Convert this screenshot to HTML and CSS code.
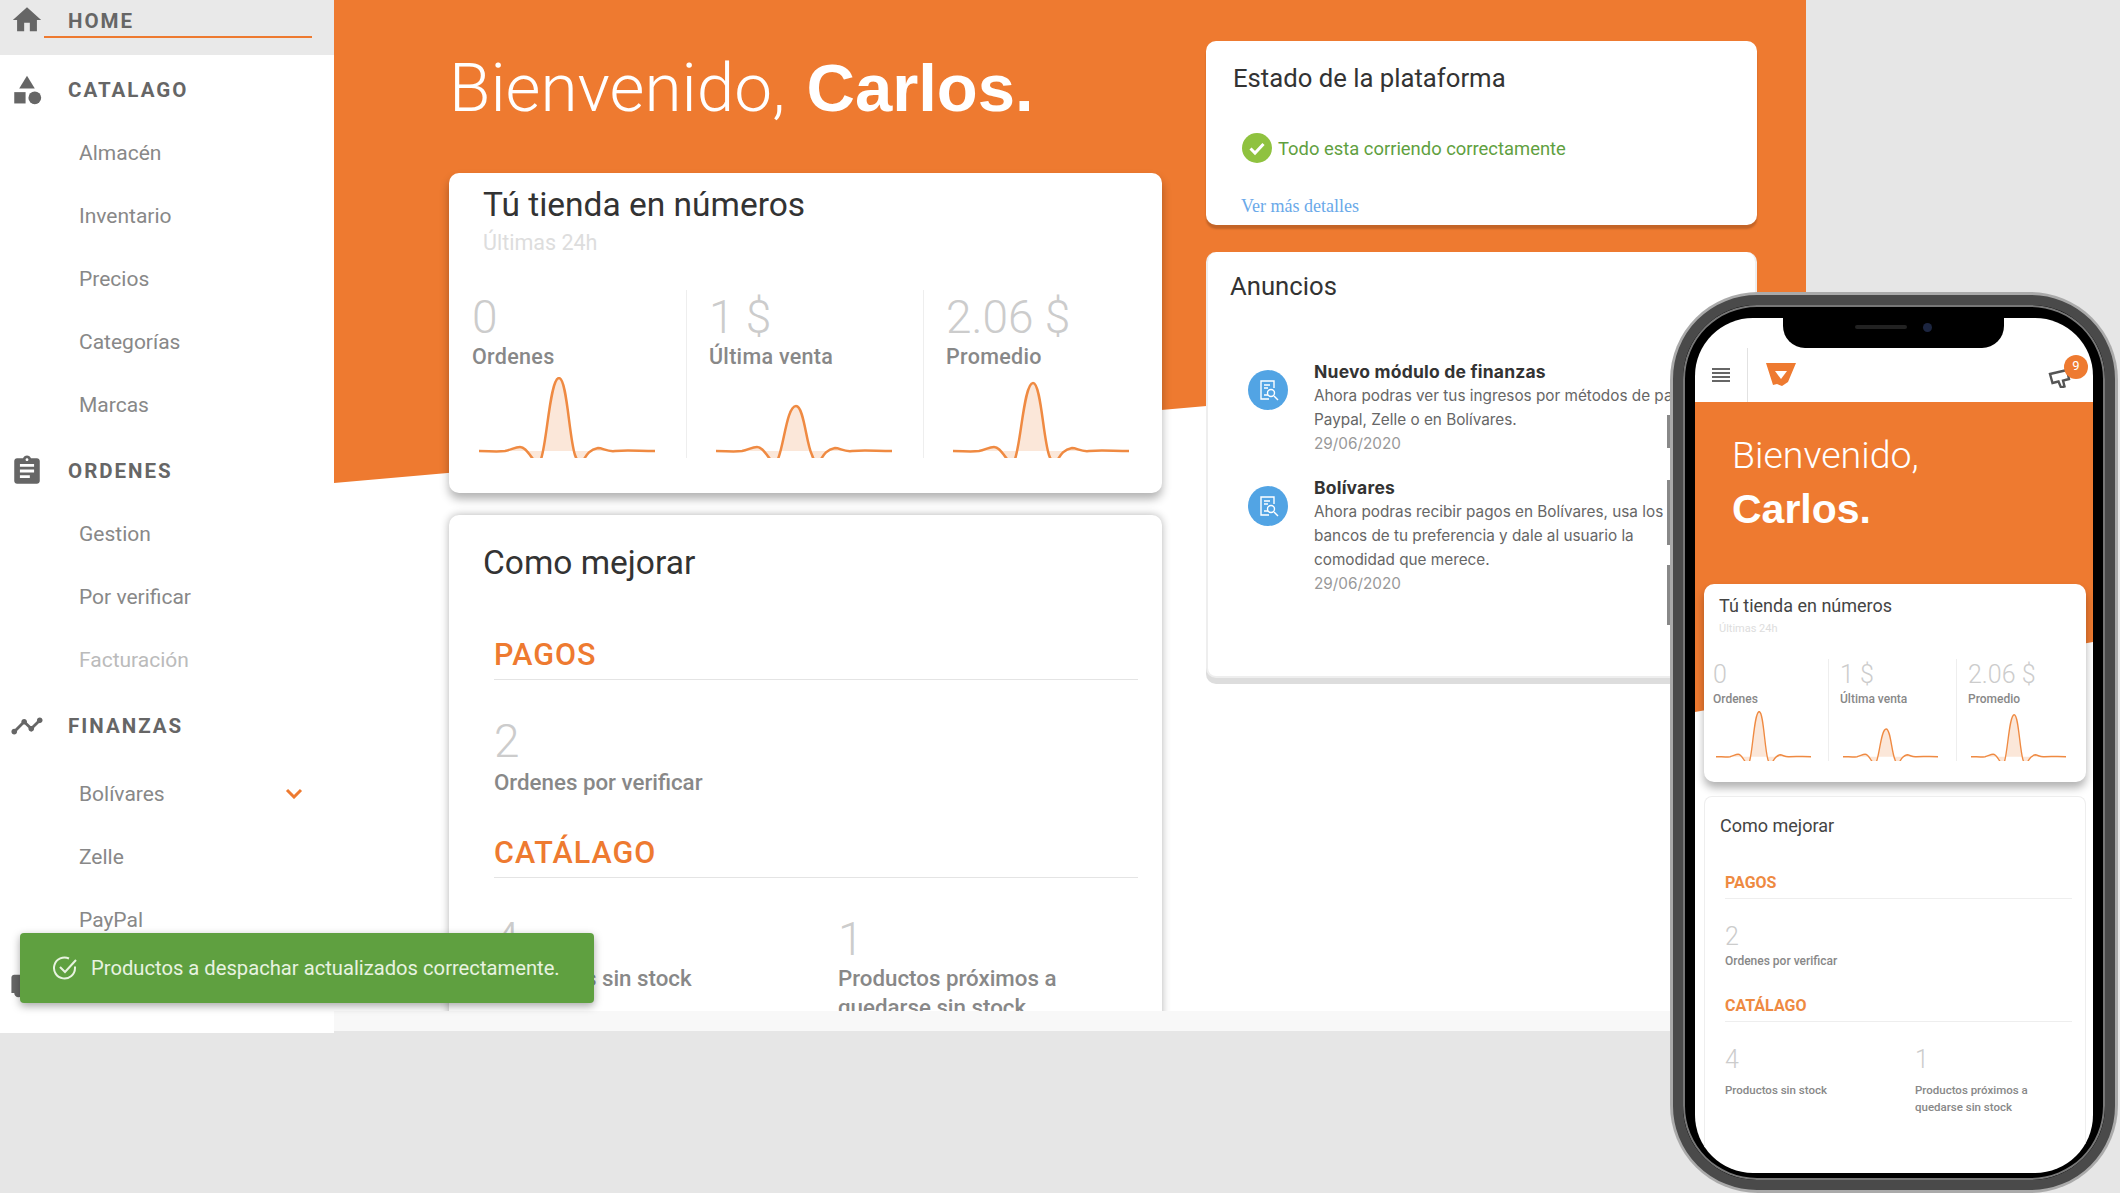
FILE: index.html
```html
<!DOCTYPE html>
<html lang="es">

<head>
  <meta charset="UTF-8">
  <title>Bienvenido, Carlos.</title>
  <link rel="stylesheet" href="styles.css">
</head>

<body>
  <div class="app">
    <!-- Left menu -->
    <nav class="sidebar">
      <div class="nav-home">
        <svg class="nav-icon" viewBox="0 0 24 24"><path d="M10 20v-6h4v6h5v-8h3L12 3 2 12h3v8z"/></svg>
        <span class="nav-home-label">HOME</span>
      </div>

      <div class="nav-group">
        <svg class="nav-icon" viewBox="0 0 24 24"><path d="M12 2l-5.5 9h11z"/><circle cx="17.5" cy="17.5" r="4.5"/><path d="M3 13.5h8v8H3z"/></svg>
        <span>CATALAGO</span>
      </div>
      <a class="nav-sub">Almacén</a>
      <a class="nav-sub">Inventario</a>
      <a class="nav-sub">Precios</a>
      <a class="nav-sub">Categorías</a>
      <a class="nav-sub">Marcas</a>

      <div class="nav-group">
        <svg class="nav-icon" viewBox="0 0 24 24"><path d="M19 3h-4.18C14.4 1.84 13.3 1 12 1c-1.3 0-2.4.84-2.82 2H5c-1.1 0-2 .9-2 2v14c0 1.1.9 2 2 2h14c1.1 0 2-.9 2-2V5c0-1.1-.9-2-2-2zm-7 0c.55 0 1 .45 1 1s-.45 1-1 1-1-.45-1-1 .45-1 1-1zm2 14H7v-2h7v2zm3-4H7v-2h10v2zm0-4H7V7h10v2z"/></svg>
        <span>ORDENES</span>
      </div>
      <a class="nav-sub">Gestion</a>
      <a class="nav-sub">Por verificar</a>
      <a class="nav-sub nav-sub-off">Facturación</a>

      <div class="nav-group nav-group-fin">
        <svg class="nav-icon" viewBox="0 0 24 24"><path d="M23 8c0 1.1-.9 2-2 2-.18 0-.35-.02-.51-.07l-3.56 3.55c.05.16.07.34.07.52 0 1.1-.9 2-2 2s-2-.9-2-2c0-.18.02-.36.07-.52l-2.55-2.55c-.16.05-.34.07-.52.07s-.36-.02-.52-.07l-4.55 4.56c.05.16.07.33.07.51 0 1.1-.9 2-2 2s-2-.9-2-2 .9-2 2-2c.18 0 .35.02.51.07l4.56-4.55C8.02 9.36 8 9.18 8 9c0-1.1.9-2 2-2s2 .9 2 2c0 .18-.02.36-.07.52l2.55 2.55c.16-.05.34-.07.52-.07s.36.02.52.07l3.55-3.56C19.02 8.35 19 8.18 19 8c0-1.1.9-2 2-2s2 .9 2 2z"/></svg>
        <span>FINANZAS</span>
      </div>
      <a class="nav-sub">Bolívares
        <svg class="nav-chevron" viewBox="0 0 18 11"><path d="M2 2l7 7 7-7"/></svg>
      </a>
      <a class="nav-sub">Zelle</a>
      <a class="nav-sub">PayPal</a>

      <div class="nav-group">
        <svg class="nav-icon" viewBox="0 0 24 24"><path d="M20 8h-3V4H3c-1.1 0-2 .9-2 2v11h2c0 1.66 1.34 3 3 3s3-1.34 3-3h6c0 1.66 1.34 3 3 3s3-1.34 3-3h2v-5l-3-4z"/></svg>
      </div>
    </nav>

    <!-- Desktop dashboard -->
    <main class="main">
      <div class="view">
        <div class="hero-bg"></div>

        <div class="col-left">
          <h1 class="welcome">Bienvenido, <b>Carlos.</b></h1>

          <section class="card card-numbers">
            <h2 class="card-title">Tú tienda en números</h2>
            <div class="card-sub">Últimas 24h</div>
            <div class="stats">
              <div class="stat">
                <div class="stat-num">0</div>
                <div class="stat-label">Ordenes</div>
                <svg class="spark" viewBox="0 0 176 81" preserveAspectRatio="none"><path d="M0 74C10 74 18 75 26 74C32 73 36 70 41 70C47 70 50 78 55 83C58 86 60 86 62 82C68 66 71 1 80 1C88 1 90 60 96 78C98 84 100 86 103 85C106 82 108 73 119 71C124 71 128 75 136 74C148 73 160 74 176 74"/></svg>
              </div>
              <div class="stat">
                <div class="stat-num">1 $</div>
                <div class="stat-label">Última venta</div>
                <svg class="spark" viewBox="0 0 176 81" preserveAspectRatio="none"><path d="M0 74C10 74 18 75 26 74C32 73 36 70 41 70C47 70 50 78 55 83C58 86 60 86 62 82C68 68 71 29 80 29C88 29 90 66 96 78C98 84 100 86 103 85C106 82 108 73 119 71C124 71 128 75 136 74C148 73 160 74 176 74"/></svg>
              </div>
              <div class="stat">
                <div class="stat-num">2.06 $</div>
                <div class="stat-label">Promedio</div>
                <svg class="spark" viewBox="0 0 176 81" preserveAspectRatio="none"><path d="M0 74C10 74 18 75 26 74C32 73 36 70 41 70C47 70 50 78 55 83C58 86 60 86 62 82C68 66 71 6 80 6C88 6 90 60 96 78C98 84 100 86 103 85C106 82 108 73 119 71C124 71 128 75 136 74C148 73 160 74 176 74"/></svg>
              </div>
            </div>
          </section>

          <section class="card card-tips">
            <h2 class="card-title">Como mejorar</h2>
            <h3 class="tip-head tip-head-first">PAGOS</h3>
            <div class="tip-num">2</div>
            <div class="tip-label">Ordenes por verificar</div>
            <h3 class="tip-head">CATÁLAGO</h3>
            <div class="tip-row">
              <div class="tip-cell">
                <div class="tip-num">4</div>
                <div class="tip-label">Productos sin stock</div>
              </div>
              <div class="tip-cell">
                <div class="tip-num">1</div>
                <div class="tip-label">Productos próximos a quedarse sin stock</div>
              </div>
            </div>
          </section>
        </div>

        <div class="col-right">
          <section class="card card-status">
            <h2 class="side-title">Estado de la plataforma</h2>
            <div class="status-row">
              <svg class="status-check" viewBox="0 0 30 30"><circle cx="15" cy="15" r="15"/><path d="M8.5 15.5l4.5 4.5 8.5-9"/></svg>
              Todo esta corriendo correctamente
            </div>
            <a class="status-link">Ver más detalles</a>
          </section>

          <section class="card card-news">
            <h2 class="side-title">Anuncios</h2>
            <div class="news news-first">
              <svg class="news-icon" viewBox="0 0 40 40"><circle cx="20" cy="20" r="20"/><path class="news-line" d="M26 18v-7H13v18h8M16 15h6M16 18h4M16 25h4"/><circle class="news-line" cx="23" cy="23" r="3.5"/><path class="news-line" d="M26 26l4 4"/></svg>
              <div class="news-body">
                <div class="news-title">Nuevo módulo de finanzas</div>
                <div>Ahora podras ver tus ingresos por métodos de pago:<br>Paypal, Zelle o en Bolívares.</div>
                <div class="news-date">29/06/2020</div>
              </div>
            </div>
            <div class="news">
              <svg class="news-icon" viewBox="0 0 40 40"><circle cx="20" cy="20" r="20"/><path class="news-line" d="M26 18v-7H13v18h8M16 15h6M16 18h4M16 25h4"/><circle class="news-line" cx="23" cy="23" r="3.5"/><path class="news-line" d="M26 26l4 4"/></svg>
              <div class="news-body">
                <div class="news-title">Bolívares</div>
                <div>Ahora podras recibir pagos en Bolívares, usa los<br>bancos de tu preferencia y dale al usuario la<br>comodidad que merece.</div>
                <div class="news-date">29/06/2020</div>
              </div>
            </div>
          </section>
        </div>
      </div>
    </main>
  </div>

  <!-- Toast over the dashboard -->
  <div class="toast">
    <svg class="toast-icon" viewBox="0 0 26 26"><path d="M23 11.5V13a10.5 10.5 0 1 1-6-9.5"/><path d="M8 12l5 5L24 5"/></svg>
    Productos a despachar actualizados correctamente.
  </div>

  <!-- Phone mockup -->
  <div class="phone">
    <span class="phone-btn phone-btn-a"></span>
    <span class="phone-btn phone-btn-b"></span>
    <span class="phone-btn phone-btn-c"></span>
    <div class="phone-bezel">
      <div class="screen">
        <div class="notch"><span class="notch-speaker"></span><span class="notch-camera"></span></div>
        <div class="m-hero-bg"></div>

        <header class="m-bar">
          <div class="m-burger"><span></span><span></span><span></span><span></span></div>
          <svg class="m-logo" viewBox="0 0 30 24"><path d="M0 1h30l-8 19-6 4-5-2-4 1z"/><path class="m-logo-hole" d="M9 9h12l-6 8z"/></svg>
          <div class="m-bell">
            <svg class="m-horn" viewBox="0 0 24 20"><path d="M2 6l17-4 2 9-6 1.500 1.500 6-3.500 1-2.500-6-6 1.500z"/></svg>
            <span class="m-badge">9</span>
          </div>
        </header>

        <h1 class="m-welcome">Bienvenido,<br><b>Carlos.</b></h1>

        <section class="card m-numbers">
          <h2 class="m-title">Tú tienda en números</h2>
          <div class="m-sub">Últimas 24h</div>
          <div class="m-stats">
            <div class="m-stat">
              <div class="m-num">0</div>
              <div class="m-label">Ordenes</div>
              <svg class="m-spark" viewBox="0 0 176 81" preserveAspectRatio="none"><path d="M0 74C10 74 18 75 26 74C32 73 36 70 41 70C47 70 50 78 55 83C58 86 60 86 62 82C68 66 71 1 80 1C88 1 90 60 96 78C98 84 100 86 103 85C106 82 108 73 119 71C124 71 128 75 136 74C148 73 160 74 176 74"/></svg>
            </div>
            <div class="m-stat">
              <div class="m-num">1 $</div>
              <div class="m-label">Última venta</div>
              <svg class="m-spark" viewBox="0 0 176 81" preserveAspectRatio="none"><path d="M0 74C10 74 18 75 26 74C32 73 36 70 41 70C47 70 50 78 55 83C58 86 60 86 62 82C68 68 71 29 80 29C88 29 90 66 96 78C98 84 100 86 103 85C106 82 108 73 119 71C124 71 128 75 136 74C148 73 160 74 176 74"/></svg>
            </div>
            <div class="m-stat">
              <div class="m-num">2.06 $</div>
              <div class="m-label">Promedio</div>
              <svg class="m-spark" viewBox="0 0 176 81" preserveAspectRatio="none"><path d="M0 74C10 74 18 75 26 74C32 73 36 70 41 70C47 70 50 78 55 83C58 86 60 86 62 82C68 66 71 6 80 6C88 6 90 60 96 78C98 84 100 86 103 85C106 82 108 73 119 71C124 71 128 75 136 74C148 73 160 74 176 74"/></svg>
            </div>
          </div>
        </section>

        <section class="m-tips">
          <h2 class="m-title">Como mejorar</h2>
          <h3 class="m-head m-head-first">PAGOS</h3>
          <div class="m-num">2</div>
          <div class="m-label">Ordenes por verificar</div>
          <h3 class="m-head">CATÁLAGO</h3>
          <div class="m-row">
            <div class="m-cell">
              <div class="m-num">4</div>
              <div class="m-label">Productos sin stock</div>
            </div>
            <div class="m-cell">
              <div class="m-num">1</div>
              <div class="m-label">Productos próximos a quedarse sin stock</div>
            </div>
          </div>
        </section>
      </div>
    </div>
  </div>
</body>

</html>
```
FILE: styles.css
```css
body {
  position: relative;
  height: 100vh;
  margin: 0;
  overflow: hidden;
  background-color: #e6e6e6;
  font-family: Roboto, "Liberation Sans", sans-serif;
  color: #333;
}

h1, h2, h3 {
  margin: 0;
  font-weight: 400;
}

.app {
  display: flex;
  align-items: flex-start;
  width: 1806px;
}

/* Left menu */
.sidebar {
  width: 334px;
  height: 1033px;
  overflow: hidden;
  background-color: #fff;
  font-size: 21px;
  color: #666;
}

.nav-home {
  display: flex;
  align-items: flex-start;
  height: 55px;
  background-color: #e9e9e9;
  font-size: 20.5px;
  font-weight: 700;
  letter-spacing: 2px;
}

.nav-home .nav-icon {
  margin-top: 3px;
  margin-right: 0;
}

.nav-home-label {
  width: 244px;
  height: 36px;
  padding-left: 24px;
  border-bottom: 2px solid #ee7a30;
  line-height: 42px;
}

.nav-group {
  display: flex;
  align-items: center;
  height: 64px;
  margin-top: 3px;
  margin-bottom: -1px;
  font-size: 20.5px;
  font-weight: 700;
  letter-spacing: 2px;
}

.nav-group-fin {
  margin-bottom: 4px;
}

.nav-icon {
  flex: none;
  width: 34px;
  height: 34px;
  margin-right: 24px;
  margin-left: 10px;
  fill: #666;
}

.nav-sub {
  display: flex;
  align-items: center;
  justify-content: space-between;
  height: 63px;
  padding-right: 31px;
  padding-left: 79px;
  color: #888;
}

.nav-sub-off {
  color: #bbb;
}

.nav-chevron {
  width: 18px;
  height: 11px;
  fill: none;
  stroke: #ee7a30;
  stroke-width: 3;
}

/* Dashboard */
.main {
  flex: 1;
  height: 1031px;
  background-color: #f8f8f8;
}

.view {
  position: relative;
  display: flex;
  gap: 44px;
  height: 1011px;
  padding-left: 115px;
  overflow: hidden;
  background-color: #fff;
}

.hero-bg {
  position: absolute;
  top: 0;
  left: 0;
  width: 100%;
  height: 483px;
  background-color: #ee7a30;
  clip-path: polygon(0 0, 100% 0, 100% 353px, 0 100%);
}

.col-left {
  position: relative;
  width: 713px;
  padding-top: 48px;
}

.col-right {
  position: relative;
  width: 551px;
  padding-top: 41px;
}

.welcome {
  height: 80px;
  margin-bottom: 45px;
  font-size: 67.5px;
  font-weight: 300;
  line-height: 80px;
  word-spacing: 5px;
  color: #fff;
  white-space: nowrap;
}

.welcome b {
  font-family: "Liberation Sans", sans-serif;
  font-size: 67px;
  font-weight: 700;
}

.card {
  background-color: #fff;
  border-radius: 10px;
}

.card-numbers {
  padding-top: 14px;
  padding-bottom: 35px;
  box-shadow: 0 6px 10px rgba(0, 0, 0, .3);
}

.card-title {
  padding-left: 34px;
  font-size: 33.5px;
  line-height: 36px;
  color: #333;
}

.card-sub {
  margin-top: 8px;
  padding-left: 34px;
  font-size: 21.5px;
  line-height: 24px;
  color: #ddd;
}

.stats {
  display: grid;
  grid-template-columns: 237px 237px 239px;
  margin-top: 35px;
}

.stat {
  height: 168px;
  padding-left: 22px;
  border-left: 1px solid #eee;
}

.stat:first-child {
  padding-left: 23px;
  border-left: none;
}

.stat-num {
  font-size: 46px;
  font-weight: 300;
  line-height: 54px;
  color: #ccc;
}

.stat-label {
  font-size: 21.5px;
  font-weight: 500;
  line-height: 26px;
  letter-spacing: .3px;
  color: #888;
}

.spark {
  display: block;
  width: 176px;
  height: 81px;
  margin-top: 7px;
  margin-left: 7px;
}

.spark path, .m-spark path {
  fill: #fbe7d9;
  stroke: #ef8a42;
  stroke-width: 2.5;
}

.card-tips {
  height: 600px;
  margin-top: 22px;
  padding-top: 30px;
  box-shadow: 0 0 8px rgba(0, 0, 0, .3);
}

.tip-head {
  margin: 36px 24px 0 45px;
  padding-bottom: 4px;
  border-bottom: 1px solid #e4e4e4;
  font-size: 30.5px;
  font-weight: 500;
  line-height: 40px;
  letter-spacing: 1px;
  color: #ee7a30;
}

.tip-head-first {
  margin-top: 54px;
}

.tip-num {
  margin-top: 34px;
  padding-left: 45px;
  font-size: 46px;
  font-weight: 300;
  line-height: 54px;
  color: #ccc;
}

.tip-label {
  padding-right: 60px;
  padding-left: 45px;
  font-size: 22.3px;
  font-weight: 500;
  line-height: 29px;
  color: #888;
}

.tip-row {
  display: flex;
}

.tip-row .tip-label {
  margin-top: -2px;
}

.tip-cell {
  width: 344px;
}

.side-title {
  font-size: 25.7px;
  line-height: 34px;
  color: #333;
}

.card-status {
  height: 184px;
  padding-top: 20px;
  box-sizing: border-box;
  box-shadow: 0 4px 2px rgba(0, 0, 0, .18);
}

.card-status .side-title {
  padding-left: 27px;
}

.status-row {
  display: flex;
  align-items: center;
  gap: 6px;
  height: 30px;
  margin-top: 38px;
  padding-left: 36px;
  font-size: 18.4px;
  color: #5fa040;
}

.status-check {
  width: 30px;
  height: 30px;
}

.status-check circle {
  fill: #8fc23f;
}

.status-check path {
  fill: none;
  stroke: #fff;
  stroke-width: 3;
}

.status-link {
  display: block;
  margin-top: 33px;
  padding-left: 35px;
  font-family: "Liberation Serif", serif;
  font-size: 18px;
  line-height: 20px;
  color: #6aa9e9;
}

.card-news {
  height: 426px;
  margin-top: 27px;
  padding-top: 17px;
  box-sizing: border-box;
  border: 2px solid #eee;
  border-top: none;
  box-shadow: 0 6px 0 #ddd;
}

.card-news .side-title {
  padding-left: 22px;
}

.news {
  display: flex;
  gap: 26px;
  margin-top: 20px;
  padding-left: 40px;
  font-family: Inter, "Liberation Sans", sans-serif;
  font-size: 15.3px;
  line-height: 24px;
  color: #666;
  white-space: nowrap;
}

.news-first {
  margin-top: 57px;
}

.news-icon {
  flex: none;
  width: 40px;
  height: 40px;
  margin-top: 10px;
}

.news-icon circle {
  fill: #52a4e4;
}

.news-icon .news-line {
  fill: none;
  stroke: #fff;
  stroke-width: 1.4;
}

.news-title {
  margin-bottom: 0;
  font-size: 17.5px;
  font-weight: 700;
  letter-spacing: .2px;
  color: #333;
}

.news-date {
  color: #999;
}

/* Toast */
.toast {
  position: absolute;
  top: 933px;
  left: 20px;
  display: flex;
  align-items: center;
  gap: 13px;
  width: 574px;
  height: 70px;
  padding-left: 32px;
  box-sizing: border-box;
  background-color: #5fa040;
  border-radius: 4px;
  box-shadow: 0 3px 8px rgba(0, 0, 0, .35);
  font-size: 20.2px;
  color: #e8f3e0;
}

.toast-icon {
  width: 26px;
  height: 26px;
  fill: none;
  stroke: #e8f3e0;
  stroke-width: 2;
}

/* Phone mockup */
.phone {
  position: absolute;
  top: 292px;
  left: 1670px;
  width: 448px;
  height: 901px;
  box-sizing: border-box;
  padding: 3px;
  background-color: #aaa;
  border-radius: 88px;
}

.phone-btn {
  position: absolute;
  left: -3px;
  width: 3px;
  background-color: #888;
}

.phone-btn-a {
  top: 123px;
  height: 33px;
}

.phone-btn-b {
  top: 188px;
  height: 65px;
}

.phone-btn-c {
  top: 273px;
  height: 60px;
}

.phone-bezel {
  height: 100%;
  box-sizing: border-box;
  padding: 13px 12px 9px 12px;
  background-color: #000;
  border: 10px solid #4a4a4a;
  border-radius: 84px;
  box-shadow: inset 0 0 0 2px #777;
}

.screen {
  position: relative;
  height: 855px;
  overflow: hidden;
  background-color: #fff;
  border-radius: 58px;
}

.notch {
  position: absolute;
  top: 0;
  left: 88px;
  display: flex;
  align-items: center;
  justify-content: center;
  gap: 16px;
  width: 221px;
  height: 30px;
  padding-bottom: 12px;
  box-sizing: border-box;
  background-color: #000;
  border-radius: 0 0 22px 22px;
}

.notch-speaker {
  width: 52px;
  height: 4px;
  background-color: #222;
  border-radius: 2px;
}

.notch-camera {
  width: 9px;
  height: 9px;
  background-color: #1c2540;
  border-radius: 50%;
}

.m-hero-bg {
  position: absolute;
  top: 84px;
  left: 0;
  width: 100%;
  height: 310px;
  background-color: #ee7a30;
  clip-path: polygon(0 0, 100% 0, 100% 240px, 0 100%);
}

.m-bar {
  position: relative;
  display: flex;
  align-items: flex-end;
  height: 84px;
}

.m-burger {
  display: flex;
  flex-direction: column;
  gap: 2px;
  width: 18px;
  height: 34px;
  padding-top: 20px;
  padding-right: 17px;
  padding-left: 17px;
  box-sizing: content-box;
  border-right: 1px solid #e2e2e2;
  align-self: flex-end;
}

.m-burger span {
  height: 2px;
  background-color: #666;
}

.m-logo {
  width: 30px;
  height: 24px;
  margin-bottom: 16px;
  margin-left: 18px;
  fill: #ee7a30;
}

.m-logo .m-logo-hole {
  fill: #fff;
}

.m-bell {
  position: relative;
  width: 24px;
  height: 20px;
  margin-bottom: 14px;
  margin-left: auto;
  margin-right: 21px;
}

.m-horn {
  width: 24px;
  height: 20px;
  fill: #fff;
  stroke: #555;
  stroke-width: 2.4;
}

.m-badge {
  position: absolute;
  top: -13px;
  left: 16px;
  width: 24px;
  height: 24px;
  background-color: #ee7a30;
  border-radius: 50%;
  font-size: 13px;
  line-height: 22px;
  text-align: center;
  color: #fff;
}

.m-welcome {
  position: relative;
  height: 108px;
  padding-top: 26px;
  padding-left: 37px;
  font-size: 37.5px;
  font-weight: 300;
  line-height: 54px;
  color: #fff;
}

.m-welcome b {
  font-family: "Liberation Sans", sans-serif;
  font-size: 41px;
  font-weight: 700;
}

.m-numbers {
  position: relative;
  height: 198px;
  margin-top: 48px;
  margin-left: 9px;
  margin-right: 7px;
  padding-top: 10px;
  box-sizing: border-box;
  box-shadow: 0 6px 8px rgba(0, 0, 0, .3);
}

.m-title {
  padding-left: 15px;
  font-size: 18px;
  line-height: 24px;
  color: #444;
}

.m-sub {
  margin-top: 4px;
  padding-left: 15px;
  font-size: 11px;
  line-height: 14px;
  color: #ddd;
}

.m-stats {
  display: grid;
  grid-template-columns: 124px 128px 129px;
  margin-top: 23px;
}

.m-stat {
  height: 102px;
  padding-left: 11px;
  border-left: 1px solid #eee;
}

.m-stat:first-child {
  padding-left: 9px;
  border-left: none;
}

.m-num {
  font-size: 25px;
  font-weight: 300;
  line-height: 32px;
  color: #ccc;
}

.m-label {
  font-size: 12px;
  font-weight: 500;
  line-height: 17px;
  color: #888;
}

.m-spark {
  display: block;
  width: 95px;
  height: 50px;
  margin-top: 3px;
  margin-left: 3px;
}

.m-tips {
  position: relative;
  height: 380px;
  margin-top: 14px;
  margin-left: 9px;
  margin-right: 7px;
  padding-top: 17px;
  border-left: 1px solid #eee;
  border-right: 1px solid #eee;
  border-top: 1px solid #eee;
  border-radius: 8px 8px 0 0;
  box-sizing: border-box;
}

.m-head {
  margin: 26px 13px 0 20px;
  padding-bottom: 5px;
  border-bottom: 1px solid #eee;
  font-size: 16px;
  font-weight: 700;
  line-height: 20px;
  color: #ee8a42;
}

.m-head-first {
  margin-top: 35px;
}

.m-tips .m-num {
  margin-top: 22px;
  padding-left: 20px;
}

.m-tips .m-label {
  padding-right: 30px;
  padding-left: 20px;
}

.m-row {
  display: flex;
}

.m-cell {
  width: 190px;
}

.m-cell .m-label {
  margin-top: 6px;
  font-size: 11.5px;
}
```
